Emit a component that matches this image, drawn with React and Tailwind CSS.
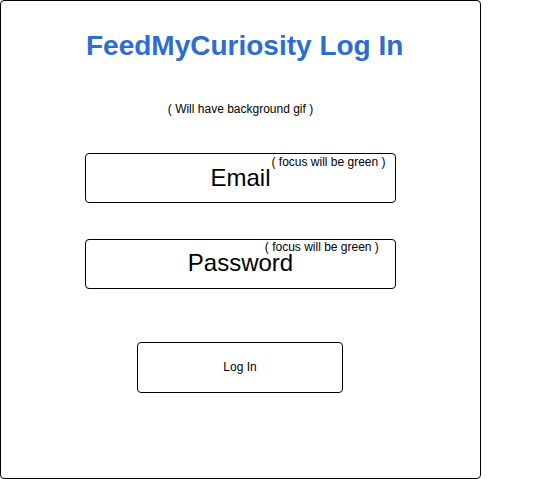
export default function App() {
  return (
    <div className="w-[539px] h-[479px] bg-white" style={{ fontFamily: '"Liberation Sans", Arial, sans-serif' }}>
      <div className="w-[481px] h-[479px] border border-black rounded-[4px] flex flex-col items-center text-black">
        <h1 className="self-start mt-[29px] ml-[85px] text-[28px] leading-[32px] font-bold text-[#2d6dd0] whitespace-nowrap">FeedMyCuriosity Log In</h1>
        <p className="mt-[40px] text-[12px] leading-[14px]">( Will have background gif )</p>
        <div className="mt-[37px] w-[311px] h-[50px] border border-black rounded-[4px] flex justify-center items-start">
          <span className="relative mt-[10px] text-[24px] leading-[28px]">
            Email
            <span className="absolute left-[61px] top-[-9px] text-[12px] leading-[14px] whitespace-nowrap">( focus will be green )</span>
          </span>
        </div>
        <div className="mt-[36px] w-[311px] h-[50px] border border-black rounded-[4px] flex justify-center items-start">
          <span className="relative mt-[9px] text-[24px] leading-[28px]">
            Password
            <span className="absolute left-[77px] top-[-9px] text-[12px] leading-[14px] whitespace-nowrap">( focus will be green )</span>
          </span>
        </div>
        <div className="mt-[53px] ml-[-1px] w-[206px] h-[51px] border border-black rounded-[4px] flex items-center justify-center pb-[2px] text-[12px]">
          Log In
        </div>
      </div>
    </div>
  );
}
